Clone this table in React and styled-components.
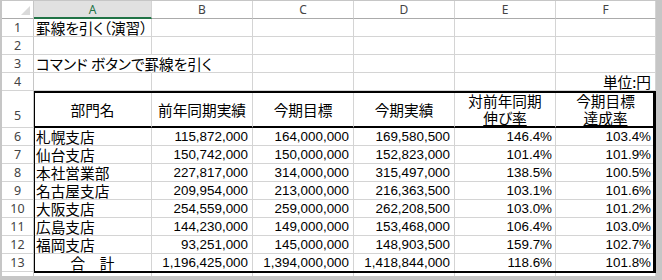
import React from "react";
import styled, { createGlobalStyle } from "styled-components";

const GlobalStyle = createGlobalStyle`
  html, body {
    margin: 0;
    padding: 0;
    background: #c6c6c6;
  }
  #root {
    width: 662px;
    height: 280px;
  }
`;

const COLS = "32px 118px 101px 101px 101px 101px 100px";
const GRID = "#d4d4d4";
const JP = `"Noto Sans CJK JP", "Noto Sans", sans-serif`;
const NUM = `"Liberation Sans", Arial, sans-serif`;

const Frame = styled.div`
  box-sizing: border-box;
  width: 662px;
  height: 280px;
  padding: 1px 6px 4px 2px;
`;

const Sheet = styled.div`
  height: 275px;
  background: #fff;
  overflow: hidden;
  display: flex;
  flex-direction: column;
`;

const ColumnHeaderRow = styled.div`
  display: grid;
  grid-template-columns: ${COLS};
  height: 18px;
  flex: none;
`;

const Corner = styled.div`
  position: relative;
  box-sizing: border-box;
  border-right: 1px solid #c6c6c6;
  border-bottom: 1px solid #ababab;
  &::after {
    content: "";
    position: absolute;
    right: 3px;
    bottom: 3px;
    border-style: solid;
    border-width: 0 0 9px 9px;
    border-color: transparent transparent #dadada transparent;
  }
`;

const HeadCell = styled.div`
  box-sizing: border-box;
  display: flex;
  align-items: center;
  justify-content: center;
  font-family: "Noto Sans", "Liberation Sans", sans-serif;
  font-size: 12px;
  line-height: 14px;
  color: ${(p) => (p.$selected ? "#217346" : "#444")};
  background: ${(p) => (p.$selected ? "#e1e1e1" : "#fff")};
  border-right: 1px solid ${GRID};
  border-bottom: ${(p) => (p.$selected ? "2px solid #217346" : "1px solid #ababab")};
  padding-top: 1px;
`;

const Row = styled.div`
  display: grid;
  grid-template-columns: ${COLS};
  height: ${(p) => p.$h || 18}px;
  flex: none;
`;

const RowNum = styled.div`
  box-sizing: border-box;
  display: flex;
  align-items: center;
  justify-content: center;
  font-family: "Noto Sans", "Liberation Sans", sans-serif;
  font-size: 12.5px;
  line-height: 14px;
  color: #444;
  border-right: 1px solid #c6c6c6;
  border-bottom: 1px solid ${GRID};
  padding-top: ${(p) => (p.$low ? "14px" : "0")};
`;

const Cell = styled.div`
  box-sizing: border-box;
  display: flex;
  align-items: center;
  justify-content: ${(p) =>
    p.$align === "right" ? "flex-end" : p.$align === "center" ? "center" : "flex-start"};
  padding: 0 ${(p) => p.$pr ?? 2}px 0 2px;
  white-space: nowrap;
  font-family: ${(p) => (p.$num ? NUM : JP)};
  font-size: ${(p) => (p.$num ? "13.4px" : "14.67px")};
  line-height: 16px;
  font-feature-settings: "palt";
  color: #000;
  border-right: ${(p) => (p.$noRight ? "1px solid transparent" : `1px solid ${GRID}`)};
  border-bottom: ${(p) => p.$bottom || `1px solid ${GRID}`};
`;

const HeaderText = styled.div`
  text-align: center;
  line-height: 17px;
  padding-top: 1px;
`;

const Under = styled.span`
  text-decoration: underline;
  text-underline-offset: 1px;
`;

const TableBlock = styled.div`
  position: relative;
  flex: none;
  &::after {
    content: "";
    position: absolute;
    top: 0;
    left: 32px;
    right: 0;
    bottom: -1px;
    border: 2px solid #000;
    border-right-width: 3px;
    border-left-width: 1px;
    pointer-events: none;
  }
`;

const columns = ["A", "B", "C", "D", "E", "F"];

const rows = [
  ["札幌支店", "115,872,000", "164,000,000", "169,580,500", "146.4%", "103.4%"],
  ["仙台支店", "150,742,000", "150,000,000", "152,823,000", "101.4%", "101.9%"],
  ["本社営業部", "227,817,000", "314,000,000", "315,497,000", "138.5%", "100.5%"],
  ["名古屋支店", "209,954,000", "213,000,000", "216,363,500", "103.1%", "101.6%"],
  ["大阪支店", "254,559,000", "259,000,000", "262,208,500", "103.0%", "101.2%"],
  ["広島支店", "144,230,000", "149,000,000", "153,468,000", "106.4%", "103.0%"],
  ["福岡支店", "93,251,000", "145,000,000", "148,903,500", "159.7%", "102.7%"],
];

const total = ["合　計", "1,196,425,000", "1,394,000,000", "1,418,844,000", "118.6%", "101.8%"];

const HEAD = "2px solid #000";

function DataRow({ n, values, center }) {
  return (
    <Row>
      <RowNum>{n}</RowNum>
      <Cell $align={center ? "center" : "left"}>{values[0]}</Cell>
      <Cell $num $align="right" $pr={4}>{values[1]}</Cell>
      <Cell $num $align="right" $pr={4}>{values[2]}</Cell>
      <Cell $num $align="right" $pr={4}>{values[3]}</Cell>
      <Cell $num $align="right" $pr={3}>{values[4]}</Cell>
      <Cell $num $align="right" $pr={4}>{values[5]}</Cell>
    </Row>
  );
}

export default function App() {
  return (
    <>
      <GlobalStyle />
      <Frame>
        <Sheet>
          <ColumnHeaderRow>
            <Corner />
            {columns.map((c) => (
              <HeadCell key={c} $selected={c === "A"}>{c}</HeadCell>
            ))}
          </ColumnHeaderRow>

          <Row>
            <RowNum>1</RowNum>
            <Cell>罫線を引く（演習）</Cell>
            <Cell /><Cell /><Cell /><Cell /><Cell />
          </Row>
          <Row>
            <RowNum>2</RowNum>
            <Cell /><Cell /><Cell /><Cell /><Cell /><Cell />
          </Row>
          <Row>
            <RowNum>3</RowNum>
            <Cell $noRight>コマンド ボタンで罫線を引く</Cell>
            <Cell /><Cell /><Cell /><Cell /><Cell />
          </Row>
          <Row>
            <RowNum>4</RowNum>
            <Cell /><Cell /><Cell /><Cell /><Cell />
            <Cell $align="right" $pr={4}>単位:円</Cell>
          </Row>

          <TableBlock>
            <Row $h={37}>
              <RowNum $low>5</RowNum>
              <Cell $align="center" $bottom={HEAD}><HeaderText>部門名</HeaderText></Cell>
              <Cell $align="center" $bottom={HEAD}><HeaderText>前年同期実績</HeaderText></Cell>
              <Cell $align="center" $bottom={HEAD}><HeaderText>今期目標</HeaderText></Cell>
              <Cell $align="center" $bottom={HEAD}><HeaderText>今期実績</HeaderText></Cell>
              <Cell $align="center" $bottom={HEAD}>
                <HeaderText>対前年同期<br /><Under>伸び率</Under></HeaderText>
              </Cell>
              <Cell $align="center" $bottom={HEAD}>
                <HeaderText>今期目標<br /><Under>達成率</Under></HeaderText>
              </Cell>
            </Row>
            {rows.map((r, i) => (
              <DataRow key={r[0]} n={i + 6} values={r} />
            ))}
            <DataRow n={13} values={total} center />
          </TableBlock>

          <Row>
            <RowNum />
            <Cell /><Cell /><Cell /><Cell /><Cell /><Cell />
          </Row>
        </Sheet>
      </Frame>
    </>
  );
}
